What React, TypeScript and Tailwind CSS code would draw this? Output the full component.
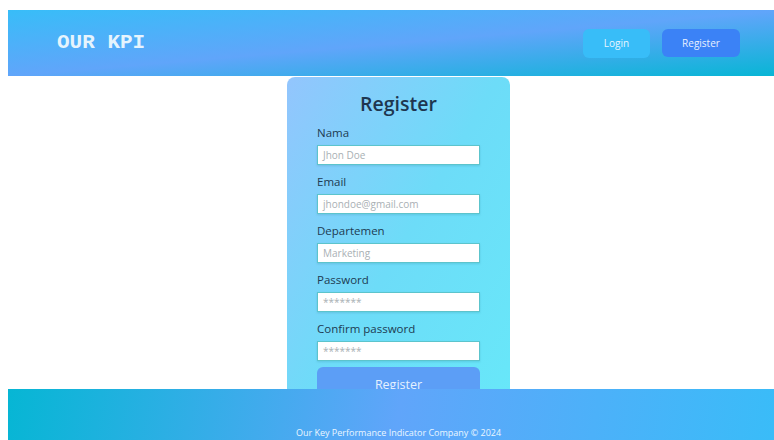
import React from "react";

const sans = { fontFamily: '"Open Sans", "Noto Sans", sans-serif' };

type Field = { label: string; placeholder: string };

const fields: Field[] = [
  { label: "Nama", placeholder: "Jhon Doe" },
  { label: "Email", placeholder: "jhondoe@gmail.com" },
  { label: "Departemen", placeholder: "Marketing" },
  { label: "Password", placeholder: "*******" },
  { label: "Confirm password", placeholder: "*******" },
];

function FormField({ label, placeholder }: Field) {
  return (
    <div className="flex flex-col mb-[9px]">
      <label className="h-4 leading-4 text-[11.5px] text-[#1d3b52]">{label}</label>
      <div className="mt-1 h-5 bg-white border border-[#5cc4cc] shadow-[0_1px_2px_rgba(0,80,100,0.15)] flex items-center pl-[5px]">
        <span className="text-[10px] leading-none text-[#a9b0b4]">{placeholder}</span>
      </div>
    </div>
  );
}

export default function App() {
  return (
    <div className="w-[774px] h-[440px] overflow-hidden bg-white" style={sans}>
      <div className="w-[781px] h-[440px] ml-2 pt-[10px] flex flex-col">
        <header className="h-[66px] shrink-0 flex items-center justify-between px-[49px] bg-linear-to-br/srgb from-[#38bdf8] via-[#60a5fa] to-[#06b6d4]">
          <span
            className="text-[21px] font-bold text-[#e6f4fd]"
            style={{ fontFamily: '"Liberation Mono", "DejaVu Sans Mono", monospace' }}
          >
            OUR KPI
          </span>
          <div className="flex items-center gap-3">
            <button className="w-[67px] h-[29px] rounded-md bg-[#38bdf8] text-[10px] text-[#e8f6ff]">
              Login
            </button>
            <button className="w-[78px] h-[28px] rounded-md bg-[#3b82f6] text-[10px] text-[#e8f0ff]">
              Register
            </button>
          </div>
        </header>

        <main className="flex-1 min-h-0 overflow-hidden flex justify-center pt-px">
          <div className="w-[223px] h-[345px] shrink-0 rounded-lg bg-linear-120/srgb from-[#93c5fd] via-[#6ddcf8] to-[#67e8f9] px-[30px] pt-[11px]">
            <h1 className="h-8 leading-8 text-center text-[19.5px] font-semibold text-[#1e3650] mb-[5px]">
              Register
            </h1>
            {fields.map((f) => (
              <FormField key={f.label} {...f} />
            ))}
            <button className="w-full h-[36px] -mt-[3px] rounded-md bg-[#5c9ef6] text-[12.5px] text-[#e4f1ff]">
              Register
            </button>
          </div>
        </main>

        <footer className="h-[51px] shrink-0 flex items-end justify-center bg-linear-100/srgb from-[#06b6d4] via-[#60a5fa] to-[#38bdf8]">
          <span className="text-[9px] leading-[14px] text-[#eaf6ff]">
            Our Key Performance Indicator Company © 2024
          </span>
        </footer>
      </div>
    </div>
  );
}
